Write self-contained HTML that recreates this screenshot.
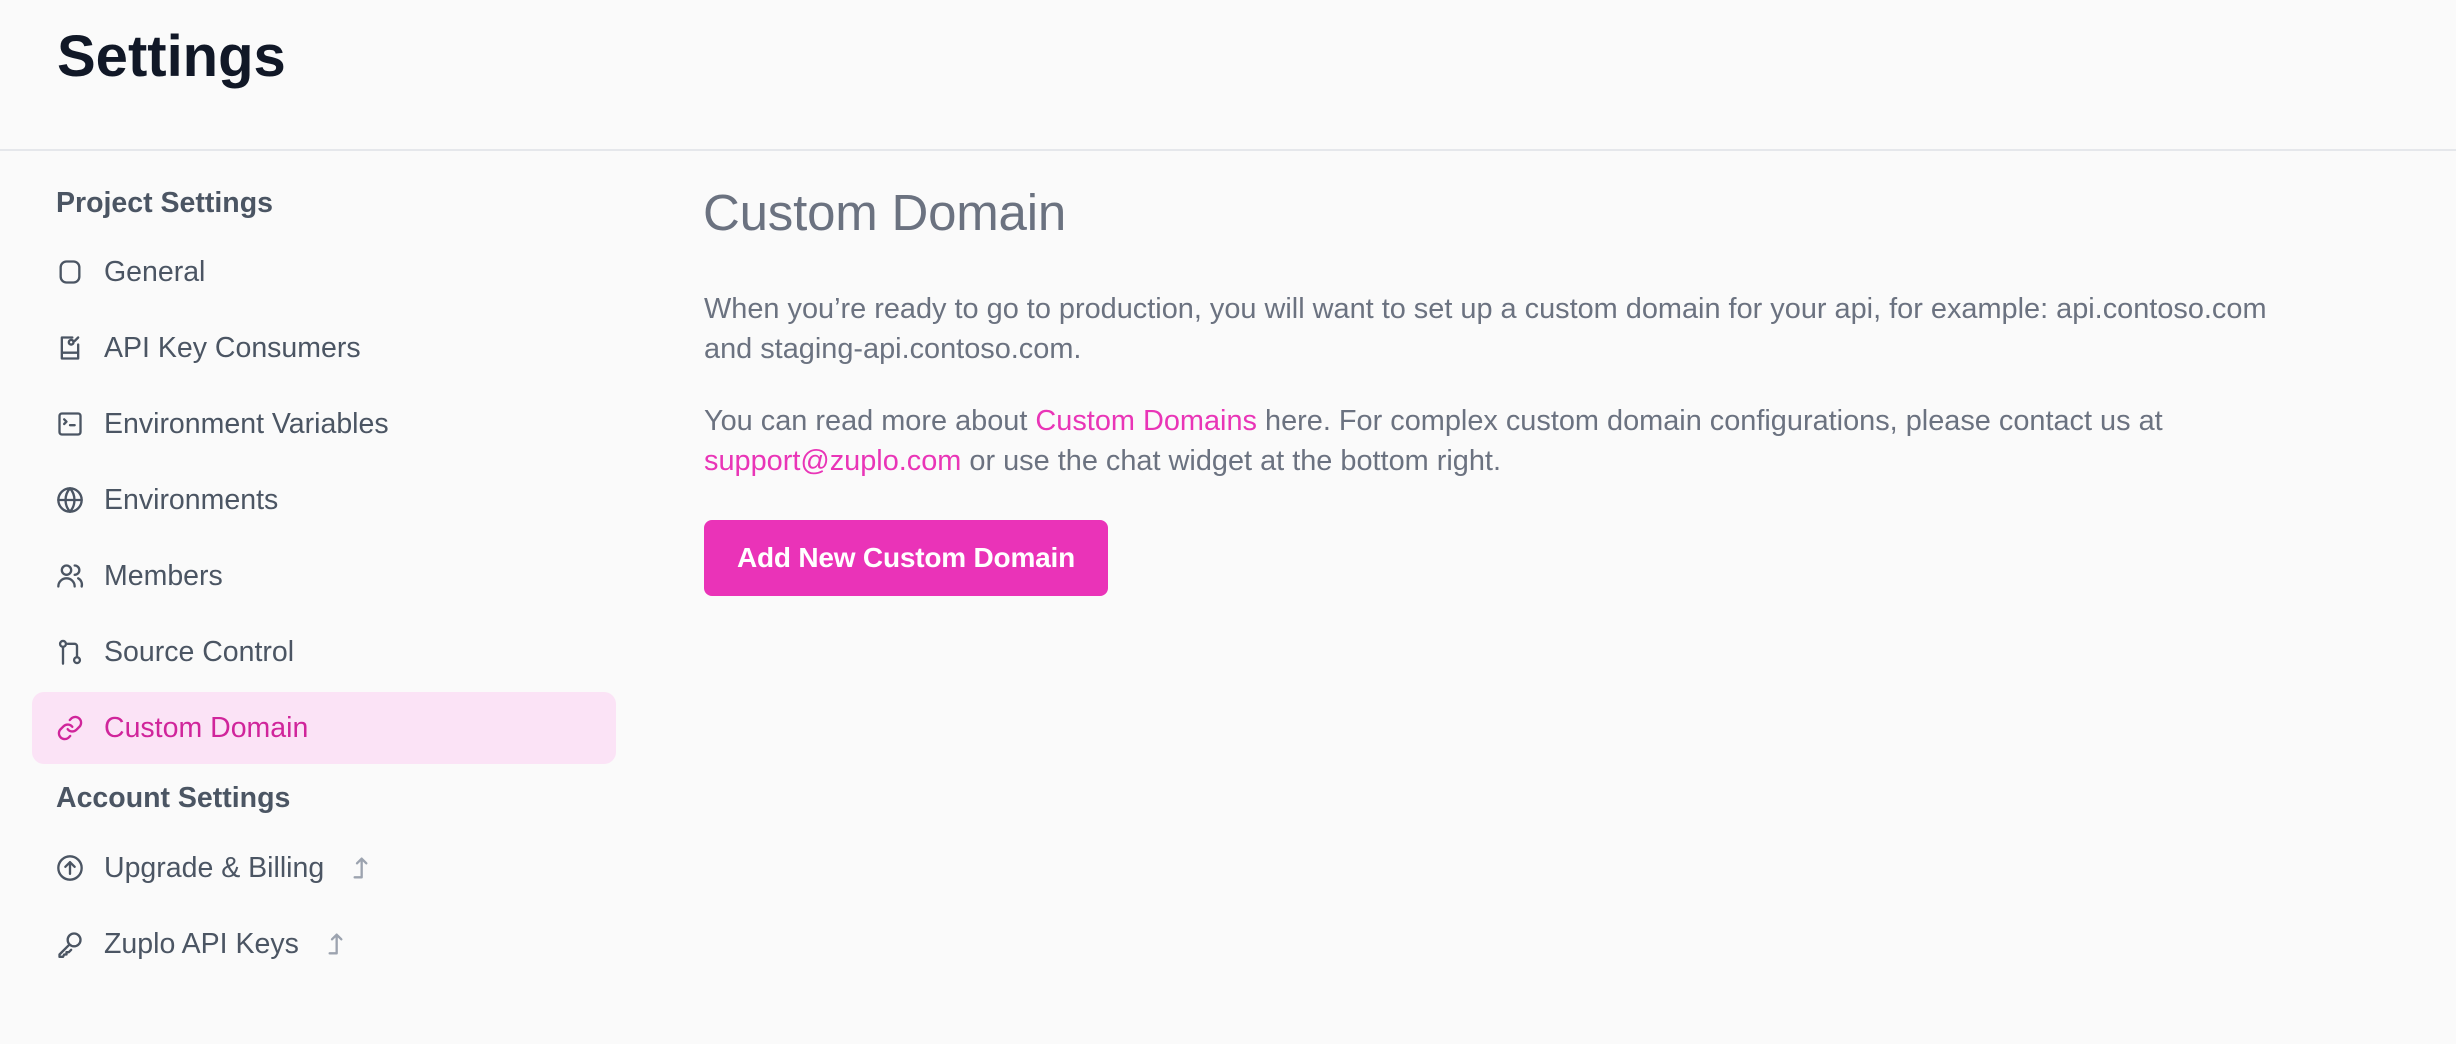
<!DOCTYPE html>
<html><head><meta charset="utf-8"><style>
*{margin:0;padding:0;box-sizing:border-box}
body{width:2456px;height:1044px;background:#fafafa;font-family:"Liberation Sans",sans-serif;position:relative;overflow:hidden;color:#4b5563}
.h{position:absolute;left:57px;top:23px;font-size:58px;font-weight:700;color:#111827;letter-spacing:0}
.hr{position:absolute;left:0;top:149px;width:2456px;height:2px;background:#e5e7eb}
.sec{position:absolute;left:56px;font-size:28.5px;font-weight:700;color:#4b5563;letter-spacing:0}
.it{position:absolute;left:56px;height:40px;display:flex;align-items:center;font-size:28.5px;color:#4b5563;letter-spacing:0}
.it svg{width:28px;height:28px;margin-right:20px;fill:none;stroke:#4b5563;stroke-width:2;stroke-linecap:round;stroke-linejoin:round}
.ext{margin-left:26px;width:28px!important;height:28px!important;stroke:#9ca3af!important}
.act{position:absolute;left:32px;top:692px;width:584px;height:72px;background:#fbe3f6;border-radius:12px}
.it.a{color:#d0259b}.it.a svg{stroke:#d0259b}
.t{position:absolute;left:703px;top:183px;font-size:51px;color:#6b7280;letter-spacing:-0.2px}
.p{position:absolute;left:704px;font-size:28.9px;line-height:40px;color:#6b7280;letter-spacing:0;white-space:nowrap}
.p a{color:#e935b7;text-decoration:none}
.btn{position:absolute;left:704px;top:520px;width:404px;height:76px;background:#ea33b8;border-radius:8px;color:#fff;font-size:28px;font-weight:700;display:flex;align-items:center;justify-content:center;letter-spacing:-0.2px}
</style></head><body>
<div class="h">Settings</div>
<div class="hr"></div>
<div class="sec" style="top:187px">Project Settings</div>
<div class="it" style="top:252px"><svg viewBox="0 0 24 24"><rect x="4" y="3" width="16" height="18" rx="5"/></svg>General</div>
<div class="it" style="top:328px"><svg viewBox="0 0 24 24"><path d="M14 3H5v18h14V9M5 16h14M15 7a2 2 0 1 0 0 .1M16 6l3-3"/></svg>API Key Consumers</div>
<div class="it" style="top:404px"><svg viewBox="0 0 24 24"><rect x="3" y="3" width="18" height="18" rx="2"/><path d="M7 8l2 2-2 2M12 13h4"/></svg>Environment Variables</div>
<div class="it" style="top:480px"><svg viewBox="0 0 24 24"><circle cx="12" cy="12" r="10"/><path d="M2 12h20M12 2a15 15 0 0 1 0 20M12 2a15 15 0 0 0 0 20"/></svg>Environments</div>
<div class="it" style="top:556px"><svg viewBox="0 0 24 24"><circle cx="9" cy="7" r="4"/><path d="M2 21a7 7 0 0 1 14 0M16 3a4 4 0 0 1 0 8M19 14a6 6 0 0 1 3 7"/></svg>Members</div>
<div class="it" style="top:632px"><svg viewBox="0 0 24 24"><circle cx="6" cy="5" r="2.5"/><circle cx="18" cy="19" r="2.5"/><path d="M6 8v14M10 5h6a2 2 0 0 1 2 2v9"/></svg>Source Control</div>
<div class="act"></div>
<div class="it a" style="top:708px"><svg viewBox="0 0 24 24"><path d="M10 13a5 5 0 0 0 7.5.5l3-3a5 5 0 0 0-7-7l-1.7 1.7"/><path d="M14 11a5 5 0 0 0-7.5-.5l-3 3a5 5 0 0 0 7 7l1.7-1.7"/></svg>Custom Domain</div>
<div class="sec" style="top:782px">Account Settings</div>
<div class="it" style="top:848px"><svg viewBox="0 0 24 24"><circle cx="12" cy="12" r="10"/><path d="M12 17V7M8 11l4-4 4 4"/></svg>Upgrade &amp; Billing<svg class="ext" viewBox="0 0 24 24"><path d="M4 20h6V4M6 8l4-4 4 4"/></svg></div>
<div class="it" style="top:924px"><svg viewBox="0 0 24 24"><circle cx="15.5" cy="8.5" r="5.5"/><path d="M11.5 12.5L3 21v2h3l1-2h2v-2h2l2-2"/></svg>Zuplo API Keys<svg class="ext" viewBox="0 0 24 24"><path d="M4 20h6V4M6 8l4-4 4 4"/></svg></div>
<div class="t">Custom Domain</div>
<div class="p" style="top:289px">When you’re ready to go to production, you will want to set up a custom domain for your api, for example: api.contoso.com<br>and staging-api.contoso.com.</div>
<div class="p" style="top:401px">You can read more about <a>Custom Domains</a> here. For complex custom domain configurations, please contact us at<br><a>support@zuplo.com</a> or use the chat widget at the bottom right.</div>
<div class="btn">Add New Custom Domain</div>
</body></html>
